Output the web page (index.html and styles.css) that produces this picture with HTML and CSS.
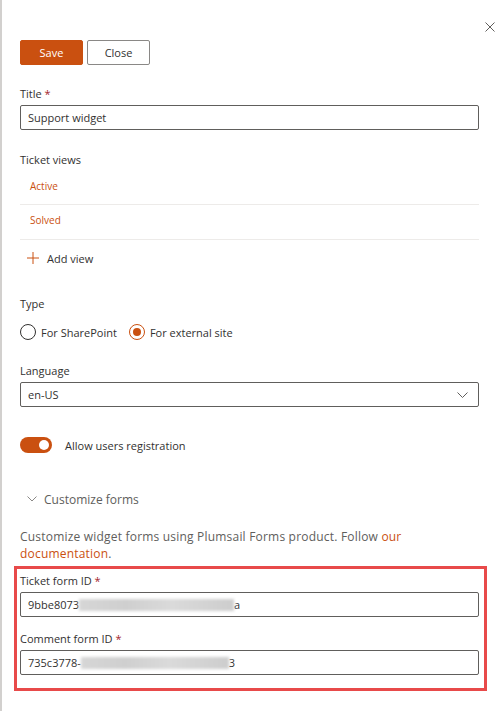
FILE: index.html
```html
<!DOCTYPE html>
<html lang="en">
<head>
  <meta charset="UTF-8" />
  <meta name="viewport" content="width=device-width, initial-scale=1" />
  <title>Support widget settings</title>
  <link rel="stylesheet" href="styles.css">
</head>
<body>
  <div class="panel">
    <span class="edge-mark mark-top"></span>
    <span class="edge-mark mark-mid"></span>

    <div class="header">
      <svg class="close-x" width="10" height="10" viewBox="0 0 10 10">
        <path d="M0.5 0.5 L9.5 9.5 M9.5 0.5 L0.5 9.5" stroke="#605e5c" stroke-width="1" fill="none" />
      </svg>
    </div>

    <div class="actions">
      <button class="btn btn-primary">Save</button>
      <button class="btn">Close</button>
    </div>

    <label class="label label-title">Title <span class="req">*</span></label>
    <div class="field">Support widget</div>

    <div class="label label-views">Ticket views</div>
    <div class="view-list">
      <div class="view-row">Active</div>
      <div class="view-row">Solved</div>
    </div>
    <div class="add-view">
      <svg width="12" height="12" viewBox="0 0 12 12">
        <path d="M6 0 V12 M0 6 H12" stroke="#ca5010" stroke-width="1" fill="none" />
      </svg>
      <span>Add view</span>
    </div>

    <div class="label label-type">Type</div>
    <div class="radios">
      <div class="radio"><span class="dot"></span>For SharePoint</div>
      <div class="radio checked"><span class="dot"></span>For external site</div>
    </div>

    <div class="label label-lang">Language</div>
    <div class="field select">
      <span>en-US</span>
      <svg width="11" height="6" viewBox="0 0 11 6">
        <path d="M0.5 0.5 L5.5 5.5 L10.5 0.5" stroke="#605e5c" stroke-width="1" fill="none" />
      </svg>
    </div>

    <div class="toggle-row">
      <span class="toggle"><span class="knob"></span></span>
      <span>Allow users registration</span>
    </div>

    <div class="section-toggle">
      <svg width="10" height="6" viewBox="0 0 10 6">
        <path d="M0.5 0.5 L5 5 L9.5 0.5" stroke="#8a8886" stroke-width="1" fill="none" />
      </svg>
      <span>Customize forms</span>
    </div>

    <p class="note">Customize widget forms using Plumsail Forms product. Follow <a href="#">our</a><br><a href="#">documentation</a>.</p>

    <div class="highlight">
      <div class="label">Ticket form ID <span class="req">*</span></div>
      <div class="field id-field">9bbe8073<span class="blur blur-a"></span>a</div>
      <div class="label label-comment">Comment form ID <span class="req">*</span></div>
      <div class="field id-field">735c3778-<span class="blur blur-b"></span>3</div>
    </div>
  </div>
</body>
</html>
```

FILE: styles.css
```css
body {
  margin: 0;
  font-family: "Open Sans", "Noto Sans", sans-serif;
  color: #323130;
  background: #fff;
}
.panel {
  position: relative;
  border-left: 2px solid #d2d0ce;
  padding: 0 17px 0 18px;
  height: 711px;
  box-sizing: border-box;
  overflow: hidden;
}
.edge-mark {
  position: absolute;
  left: -2px;
  width: 2px;
  background: #0f6cbd;
}
.mark-top { top: 0; height: 7px; }
.mark-mid { top: 32px; height: 6px; }

.header {
  height: 40px;
  display: flex;
  justify-content: flex-end;
  align-items: flex-start;
  margin-right: -16px;
}
.close-x {
  margin-top: 22px;
}

.actions {
  display: flex;
  gap: 4px;
}
.btn {
  width: 63px;
  height: 25px;
  border: 1px solid #8a8886;
  border-radius: 2px;
  background: #fff;
  color: #323130;
  font-family: inherit;
  font-size: 11px;
  padding: 0;
}
.btn-primary {
  background: #ca5010;
  border-color: #ca5010;
  color: #fff;
}

.label {
  display: block;
  font-size: 11px;
  line-height: 16px;
  margin-bottom: 3px;
}
.label-title { margin-top: 21px; }
.label-views { margin-top: 22px; margin-bottom: 0; }
.label-type { margin-top: 20px; }
.label-lang { margin-top: 20px; }
.req { color: #a4262c; }

.field {
  height: 25px;
  border: 1px solid #605e5c;
  border-radius: 2px;
  box-sizing: border-box;
  padding: 0 7px;
  display: flex;
  align-items: center;
  font-size: 11px;
}

.view-row {
  height: 35px;
  display: flex;
  align-items: center;
  padding-left: 10px;
  border-bottom: 1px solid #edebe9;
  color: #ca5010;
  font-size: 10px;
}
.view-row:first-child { height: 36px; }
.view-row:last-child {
  padding-bottom: 4px;
  box-sizing: border-box;
}
.add-view {
  height: 36px;
  display: flex;
  align-items: center;
  gap: 8px;
  padding-left: 7px;
  font-size: 11px;
}

.radios {
  display: flex;
  gap: 12px;
  height: 22px;
  align-items: center;
  margin-top: 9px;
}
.radio {
  display: flex;
  align-items: center;
  gap: 5px;
  font-size: 11px;
}
.dot {
  width: 16px;
  height: 16px;
  border: 1px solid #323130;
  border-radius: 50%;
  box-sizing: border-box;
  display: flex;
  align-items: center;
  justify-content: center;
}
.checked .dot { border-color: #ca5010; }
.checked .dot::after {
  content: "";
  width: 8px;
  height: 8px;
  border-radius: 50%;
  background: #ca5010;
}

.select {
  justify-content: space-between;
  padding-right: 10px;
}

.toggle-row {
  display: flex;
  align-items: center;
  gap: 13px;
  margin-top: 30px;
  height: 16px;
  font-size: 11px;
}
.toggle {
  width: 32px;
  height: 16px;
  border-radius: 8px;
  background: #ca5010;
  display: flex;
  align-items: center;
  justify-content: flex-end;
  padding-right: 3px;
  box-sizing: border-box;
}
.knob {
  width: 10px;
  height: 10px;
  border-radius: 50%;
  background: #fff;
}

.section-toggle {
  display: flex;
  align-items: center;
  gap: 7px;
  margin-top: 38px;
  padding-left: 7px;
  height: 16px;
  color: #605e5c;
  font-size: 12px;
}

.note {
  margin: 21px 0 4px;
  font-size: 12px;
  letter-spacing: 0.2px;
  line-height: 17px;
  color: #605e5c;
}
.note a {
  color: #ca5010;
  text-decoration: none;
}

.highlight {
  margin: 0 -8px 0 -6px;
  border: 3px solid #e84a4a;
  padding: 4px 5px 13px 3px;
}
.label-comment { margin-top: 14px; }
.id-field { padding-left: 7px; }
.blur {
  display: inline-block;
  height: 12px;
  background: linear-gradient(90deg, #d6d6d6, #cfcfcf 30%, #dadada 60%, #cdcdcd);
  filter: blur(1.5px);
}
.blur-a { width: 155px; }
.blur-b { width: 148px; }
```
